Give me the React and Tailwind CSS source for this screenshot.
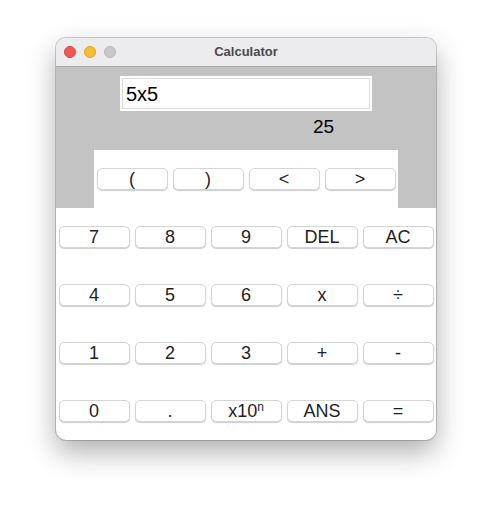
const parenKeys = ["(", ")", "<", ">"];

const keys = [
  ["7", "8", "9", "DEL", "AC"],
  ["4", "5", "6", "x", "÷"],
  ["1", "2", "3", "+", "-"],
  ["0", ".", "x10n", "ANS", "="],
];

function Key({ label }) {
  return (
    <div className="flex items-center justify-center">
      <button className="w-[71px] h-[22px] rounded-[5px] bg-white border border-[#d4d4d4] shadow-[0_1px_1px_rgba(0,0,0,0.2)] text-[18px] leading-none text-[#1e1e1e] flex items-center justify-center">
        {label === "x10n" ? (
          <span>
            x10<span className="text-[12px] relative -top-[6px]">n</span>
          </span>
        ) : (
          label
        )}
      </button>
    </div>
  );
}

function TrafficLights() {
  return (
    <div className="flex items-center gap-[8px] pl-[8px]">
      <span className="w-[12px] h-[12px] rounded-full bg-[#ee5a52] border border-[#d8463f]" />
      <span className="w-[12px] h-[12px] rounded-full bg-[#f5bd30] border border-[#dca328]" />
      <span className="w-[12px] h-[12px] rounded-full bg-[#c9c9c9] border border-[#b5b5b5]" />
    </div>
  );
}

export default function App() {
  return (
    <div
      className="w-[492px] h-[514px] bg-white pt-[38px] pl-[56px]"
      style={{ fontFamily: '"Liberation Sans", Arial, sans-serif' }}
    >
      <div className="w-[380px] h-[402px] rounded-[10px] overflow-hidden bg-white shadow-[0_12px_28px_rgba(0,0,0,0.32),0_0_0_1px_rgba(0,0,0,0.18)] flex flex-col">
        {/* title bar */}
        <div className="relative h-[29px] bg-[#ecebee] border-b border-[#a9a9a9] flex items-center">
          <TrafficLights />
          <div className="absolute inset-0 flex items-center justify-center text-[13px] font-bold text-[#4a4a4a]">
            Calculator
          </div>
        </div>

        {/* display */}
        <div className="bg-[#c3c3c3] pt-[9px] h-[83px]">
          <div className="mx-auto w-[252px] h-[35px] bg-white p-[2px]">
            <div className="w-full h-full border border-[#d9d9d9] flex items-center pl-[3px] text-[20px] text-black">
              5x5
            </div>
          </div>
          <div className="pl-[257px] pt-[4px] text-[19px] leading-[24px] text-black">25</div>
        </div>

        {/* parentheses row */}
        <div className="flex bg-[#c3c3c3] h-[58px]">
          <div className="w-[38px]" />
          <div className="w-[304px] bg-white grid grid-cols-4">
            {parenKeys.map((k) => (
              <Key key={k} label={k} />
            ))}
          </div>
          <div className="w-[38px]" />
        </div>

        {/* keypad */}
        <div className="grid grid-cols-5 grid-rows-[repeat(4,58px)]">
          {keys.flat().map((k) => (
            <Key key={k} label={k} />
          ))}
        </div>
      </div>
    </div>
  );
}
